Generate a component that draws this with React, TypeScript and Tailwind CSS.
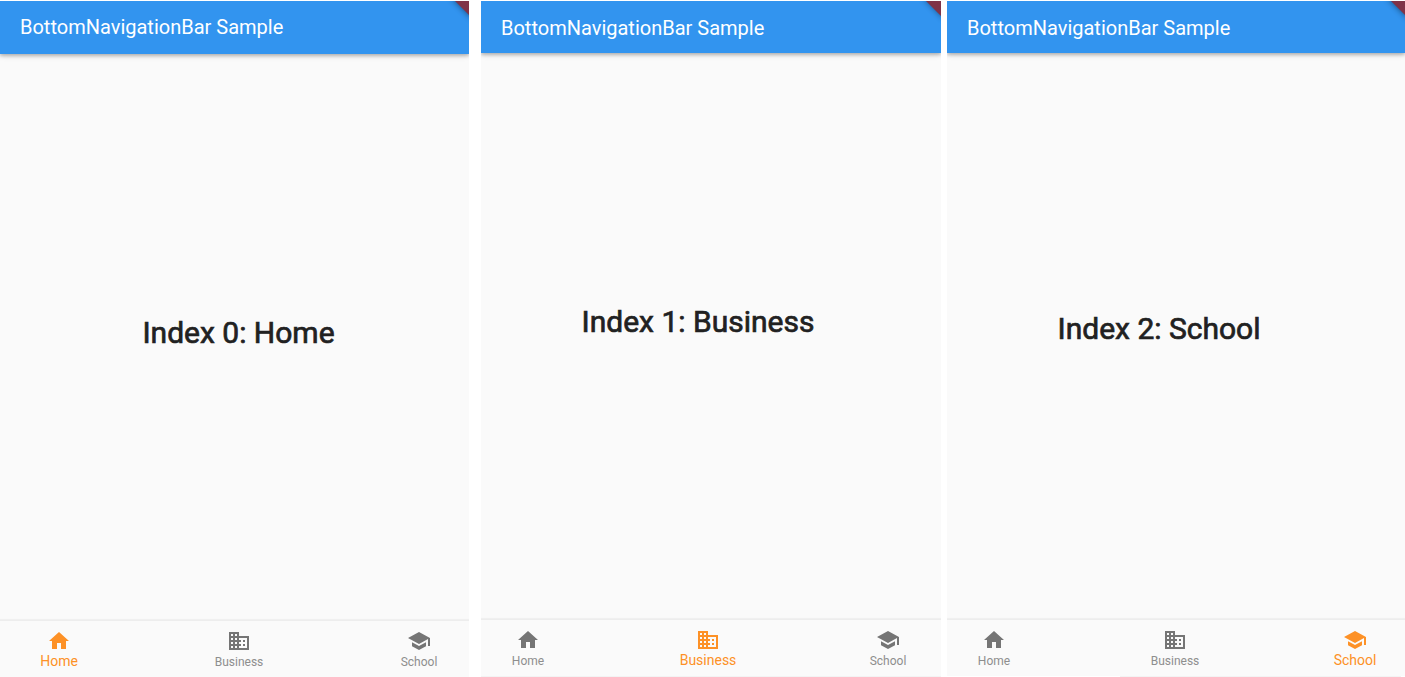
import React from "react";

const icons = {
  Home: "M10 20v-6h4v6h5v-8h3L12 3 2 12h3v8z",
  Business:
    "M12 7V3H2v18h20V7H12zM6 19H4v-2h2v2zm0-4H4v-2h2v2zm0-4H4V9h2v2zm0-4H4V5h2v2zm4 12H8v-2h2v2zm0-4H8v-2h2v2zm0-4H8V9h2v2zm0-4H8V5h2v2zm10 12h-8v-2h2v-2h-2v-2h2v-2h-2V9h8v10zm-2-8h-2v2h2v-2zm0 4h-2v2h2v-2z",
  School: "M5 13.18v4L12 21l7-3.82v-4L12 17l-7-3.82zM12 3L1 9l11 6 9-4.91V17h2V9L12 3z",
};

type Tab = keyof typeof icons;
const tabs: Tab[] = ["Home", "Business", "School"];

interface ScreenProps {
  active: Tab;
  heading: string;
  frame: string;
  bar: string;
  title: string;
  body: string;
  nav: string;
  items: string;
  ribbon: number;
  footer?: string;
}

function Screen({ active, heading, frame, bar, title, body, nav, items, ribbon, footer }: ScreenProps) {
  return (
    <section className={`flex h-[676px] shrink-0 flex-col overflow-hidden bg-[#fafafa] ${frame}`}>
      <header
        className={`relative z-10 shrink-0 bg-[#3294ef] pl-5 shadow-[0_1px_6px_rgba(0,0,0,0.22),0_2px_3px_rgba(0,0,0,0.16)] ${bar}`}
      >
        <h1 className={`text-[20px] leading-6 whitespace-nowrap text-white ${title}`}>
          BottomNavigationBar Sample
        </h1>
        <svg className="absolute top-0 right-0" width="32" height="32" viewBox="0 0 32 32">
          <defs>
            <filter id={`soft-${active}`} x="-50%" y="-50%" width="200%" height="200%">
              <feGaussianBlur stdDeviation="3" />
            </filter>
          </defs>
          <path d="M14 -4H36V18z" fill="#000" opacity="0.5" filter={`url(#soft-${active})`} />
          <path d={`M${32 - ribbon} 0H32V${ribbon}z`} fill="#7f3348" />
        </svg>
      </header>
      <main className={`flex flex-1 items-start justify-center ${body}`}>
        <p className="text-[30px] leading-9 whitespace-nowrap text-[#212121] [-webkit-text-stroke:0.7px_#212121]">
          {heading}
        </p>
      </main>
      <nav
        className={`shrink-0 border-t border-[#ededed] shadow-[0_-1px_1px_rgba(0,0,0,0.04)] ${nav}`}
      >
        <div className={`flex ${items}`}>
          {tabs.map((tab) => (
            <div
              key={tab}
              className={`flex w-[180px] shrink-0 flex-col items-center ${tab === active ? "text-[#fd9126]" : "text-[#757575]"}`}
            >
              <svg width="24" height="24" viewBox="0 0 24 24" fill="currentColor">
                <path d={icons[tab]} />
              </svg>
              <span
                className={
                  tab === active
                    ? "text-[14px] leading-4"
                    : "pt-px text-[12px] leading-4 text-[#8e8e8e]"
                }
              >
                {tab}
              </span>
            </div>
          ))}
        </div>
      </nav>
      {footer && (
        <div className="flex h-px shrink-0 bg-white">
          <div className={`h-px bg-[#f3f3f3] ${footer}`} />
        </div>
      )}
    </section>
  );
}

export default function App() {
  return (
    <div className="flex h-[677px] w-[1405px] overflow-hidden bg-white pt-px font-['Roboto',sans-serif]">
      <Screen
        active="Home"
        heading="Index 0: Home"
        frame="w-[469px] mr-3"
        bar="h-[53px]"
        title="pt-[14px]"
        body="pt-[261px] pl-2"
        nav="h-[57px]"
        items="-ml-[31px] pt-[8px]"
        ribbon={14}
      />
      <Screen
        active="Business"
        heading="Index 1: Business"
        frame="w-[460px] mr-1.5"
        bar="h-[52px]"
        title="pt-[15px]"
        body="pt-[251px] pr-[26px]"
        nav="h-[57px]"
        items="-ml-[43px] pt-[8px]"
        ribbon={15}
        footer="w-full"
      />
      <Screen
        active="School"
        heading="Index 2: School"
        frame="w-[458px]"
        bar="h-[52px]"
        title="pt-[15px]"
        body="pt-[258px] pr-[34px]"
        nav="h-[57px]"
        items="-ml-[43px] pt-[8px] [&>*:first-child]:mr-px"
        ribbon={14}
        footer="ml-[173px] w-[281px]"
      />
    </div>
  );
}
